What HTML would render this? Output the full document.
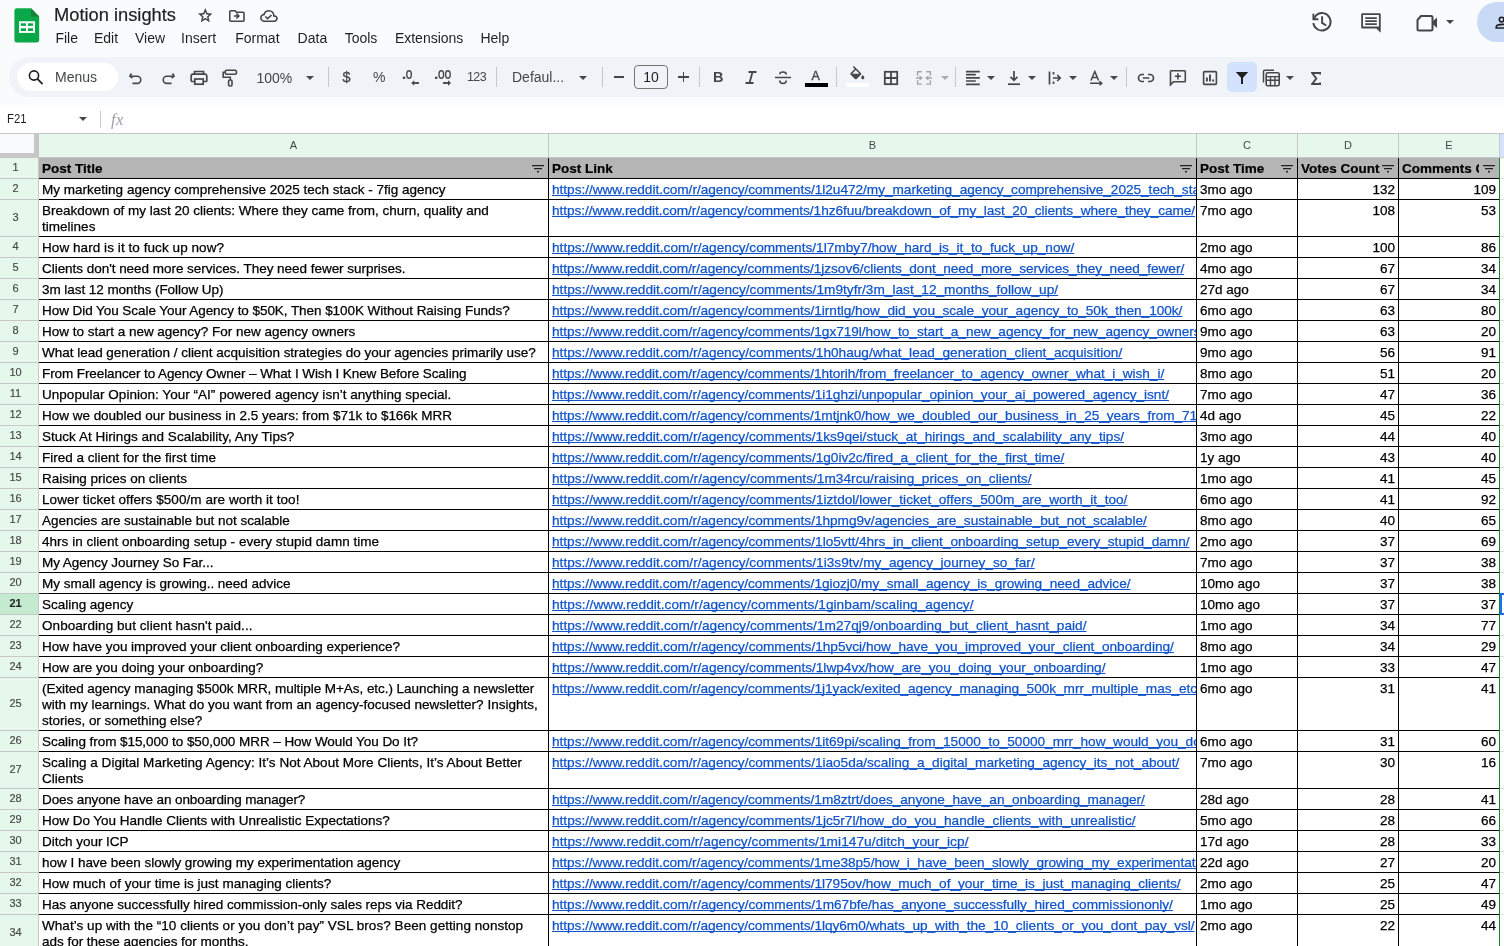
<!DOCTYPE html><html><head><meta charset="utf-8"><style>
*{margin:0;padding:0;box-sizing:border-box}
html,body{width:1504px;height:946px;overflow:hidden;background:#f9fbfd;font-family:"Liberation Sans",sans-serif;position:relative}
body{will-change:transform}
.a{position:absolute}
.t{position:absolute;white-space:nowrap;font-size:13.5px;line-height:16px;color:#000;overflow:hidden;-webkit-text-stroke:0.25px currentColor}
.lk{color:#1155cc;text-decoration:underline;text-decoration-skip-ink:none;text-underline-offset:1px;font-size:13.65px}
.menu{position:absolute;top:30px;font-size:14px;color:#1f1f1f;white-space:nowrap}
.rn{position:absolute;left:0;width:31px;text-align:center;font-size:11px;color:#444746;-webkit-text-stroke:0.15px #444746}
.ic{position:absolute}
</style></head><body>
<svg class="a" style="left:14px;top:8px" width="26" height="35" viewBox="0 0 26 35">
<path d="M2.6 0.2 H17 L25.2 8.4 V31.8 A2.6 2.6 0 0 1 22.6 34.4 H3 A2.6 2.6 0 0 1 0.4 31.8 V2.8 A2.6 2.6 0 0 1 2.6 0.2Z" fill="#0ba84a"/>
<path d="M17 0.2 L25.2 8.4 H17Z" fill="#188038"/>
<rect x="5" y="13.3" width="16" height="11.6" fill="#fff"/>
<rect x="6.8" y="15.3" width="5.2" height="2.6" fill="#0ba84a"/>
<rect x="13.9" y="15.3" width="5.2" height="2.6" fill="#0ba84a"/>
<rect x="6.8" y="20.3" width="5.2" height="2.7" fill="#0ba84a"/>
<rect x="13.9" y="20.3" width="5.2" height="2.7" fill="#0ba84a"/>
</svg>
<div class="a" style="left:54px;top:4px;font-size:18.3px;color:#1f1f1f;-webkit-text-stroke:0.2px #1f1f1f;white-space:nowrap">Motion insights</div>
<svg class="a" style="left:197.6px;top:8px" width="14.6" height="14.4" viewBox="80 -880 800 760" preserveAspectRatio="none"><path fill="#444746" d="m354-287 126-76 126 77-33-144 111-96-146-13-58-136-58 135-146 13 111 97-33 143ZM233-120l65-281L80-590l288-25 112-265 112 265 288 25-218 189 65 281-247-149-247 149Z"/></svg>
<svg class="a" style="left:229.2px;top:9.9px" width="15.8" height="12" viewBox="80 -800 800 640" preserveAspectRatio="none"><path fill="#444746" d="M480-320l160-160-160-160-56 56 64 64H320v80h168l-64 64 56 56ZM160-160q-33 0-56.5-23.5T80-240v-480q0-33 23.5-56.5T160-800h240l80 80h320q33 0 56.5 23.5T880-640v400q0 33-23.5 56.5T800-160H160Zm0-80h640v-400H447l-80-80H160v480Z"/></svg>
<svg class="a" style="left:260.1px;top:9.9px" width="17.8" height="11.9" viewBox="40 -800 880 640" preserveAspectRatio="none"><path fill="#444746" d="m414-280 226-226-58-58-169 169-84-84-57 57 142 142ZM260-160q-91 0-155.5-63T40-377q0-78 47-139t123-78q25-92 100-149t170-57q117 0 198.5 81.5T760-520q69 8 114.5 59.5T920-340q0 75-52.5 127.5T740-160H260Zm0-80h480q42 0 71-29t29-71q0-42-29-71t-71-29h-60v-80q0-83-58.5-141.5T480-720q-83 0-141.5 58.5T280-520h-20q-58 0-99 41t-41 99q0 58 41 99t99 41Z"/></svg>
<div class="menu" style="left:55.4px">File</div>
<div class="menu" style="left:93.9px">Edit</div>
<div class="menu" style="left:135.0px">View</div>
<div class="menu" style="left:181.1px">Insert</div>
<div class="menu" style="left:235.2px">Format</div>
<div class="menu" style="left:297.6px">Data</div>
<div class="menu" style="left:344.7px">Tools</div>
<div class="menu" style="left:394.9px">Extensions</div>
<div class="menu" style="left:480.4px">Help</div>
<svg class="a" style="left:1300px;top:0px" width="90" height="40" viewBox="1300 0 90 40"><g fill="none" stroke="#444746" stroke-width="1.9"><path d="M1313.4 13.8V19.3H1318.4"/><path d="M1313.3 23A8.7 8.7 0 1 0 1316.2 15.2L1313.8 18.8"/><path d="M1322.1 16.2V22.9L1326.2 25.5"/></g><path fill="#444746" fill-rule="evenodd" d="M1362.2 13.2H1379.7A1 1 0 0 1 1380.7 14.2V32.7L1376.4 28.4H1362.2A1 1 0 0 1 1361.2 27.4V14.2A1 1 0 0 1 1362.2 13.2ZM1363 15V26.6H1378.9V15Z"/><path fill="#444746" d="M1365.2 17.2H1376.8V18.9H1365.2ZM1365.2 20.2H1376.8V21.9H1365.2ZM1365.2 23.2H1376.8V24.9H1365.2Z"/></svg>
<svg class="a" style="left:1414.5px;top:11.6px" width="26" height="22" viewBox="0 0 26 22"><path d="M6 4H16a1.5 1.5 0 0 1 1.5 1.5V17a1.5 1.5 0 0 1-1.5 1.5H4A1.5 1.5 0 0 1 2.5 17V8z" fill="none" stroke="#444746" stroke-width="2" stroke-linejoin="round"/><path d="M17.5 9.5L22 5.5V16L17.5 12z" fill="#444746"/></svg>
<div class="a" style="left:1446px;top:20px;width:0;height:0;border-left:4px solid transparent;border-right:4px solid transparent;border-top:4.5px solid #444746"></div>
<div class="a" style="left:1477px;top:2px;width:80px;height:40px;border-radius:20px;background:#c9daf6"></div>
<svg class="a" style="left:1494.5px;top:13.5px" width="16" height="18" viewBox="0 0 16 18"><circle cx="6.6" cy="5.6" r="2.3" fill="none" stroke="#1f1f1f" stroke-width="1.6"/><path d="M1.2 14V13c0-1.8 3.3-2.6 6.8-2.6s6.8.8 6.8 2.6v1z" fill="none" stroke="#1f1f1f" stroke-width="1.6"/></svg>
<div class="a" style="left:9px;top:57px;width:1600px;height:40px;border-radius:20px;background:#f0f4f9"></div>
<div class="a" style="left:17px;top:63px;width:100.5px;height:28px;border-radius:14px;background:#fff"></div>
<svg class="a" style="left:27px;top:69px" width="18" height="18" viewBox="0 0 18 18"><circle cx="7" cy="6.5" r="4.6" fill="none" stroke="#1f1f1f" stroke-width="1.6"/><path d="M10.4 9.9L15.6 15.2" stroke="#1f1f1f" stroke-width="1.7"/></svg>
<div class="a" style="left:55px;top:69px;font-size:14px;color:#444746;white-space:nowrap">Menus</div>
<svg class="a" style="left:128px;top:70px" width="16" height="16" viewBox="0 0 16 16"><path d="M3.5 3.5L1.8 6.2 4.5 8" fill="none" stroke="#444746" stroke-width="1.6" stroke-linejoin="round"/><path d="M2.2 6.2H9.2a3.6 3.6 0 0 1 0 7.2H4.5" fill="none" stroke="#444746" stroke-width="1.6"/></svg>
<svg class="a" style="left:160px;top:70px" width="16" height="16" viewBox="0 0 16 16"><path d="M12.5 3.5L14.2 6.2 11.5 8" fill="none" stroke="#444746" stroke-width="1.6" stroke-linejoin="round"/><path d="M13.8 6.2H6.8a3.6 3.6 0 0 0 0 7.2H11.5" fill="none" stroke="#444746" stroke-width="1.6"/></svg>
<svg class="a" style="left:190px;top:70px" width="18" height="16" viewBox="0 0 18 16"><path d="M4.5 4.2V1.5h9v2.7" fill="none" stroke="#444746" stroke-width="1.7"/><path d="M4.5 11.5H2.2a1 1 0 0 1-1-1V6a1.8 1.8 0 0 1 1.8-1.8h12a1.8 1.8 0 0 1 1.8 1.8v4.5a1 1 0 0 1-1 1h-2.3" fill="none" stroke="#444746" stroke-width="1.7"/><rect x="4.8" y="9" width="8.4" height="5.2" fill="none" stroke="#444746" stroke-width="1.7"/></svg>
<svg class="a" style="left:222px;top:69px" width="16" height="18" viewBox="0 0 16 18"><rect x="3.2" y="1.3" width="11.3" height="4" rx="1.5" fill="none" stroke="#444746" stroke-width="1.6"/><path d="M3.2 3.3H1.2V8.2H8.3V10.8" fill="none" stroke="#444746" stroke-width="1.6"/><rect x="6.6" y="11" width="3.4" height="6" rx="1.2" fill="none" stroke="#444746" stroke-width="1.6"/></svg>
<div class="a" style="left:256.5px;top:70px;font-size:14px;color:#444746;white-space:nowrap">100%</div>
<div class="a" style="left:306px;top:76px;width:0;height:0;border-left:4px solid transparent;border-right:4px solid transparent;border-top:4px solid #444746"></div>
<div class="a" style="left:328px;top:67px;width:1px;height:20px;background:#c7c7c7"></div>
<div class="a" style="left:342.5px;top:69px;font-size:14.5px;color:#444746;-webkit-text-stroke:0.3px #444746">$</div>
<div class="a" style="left:373px;top:69px;font-size:14px;color:#444746">%</div>
<svg class="a" style="left:400px;top:66px" width="24" height="22" viewBox="0 0 24 22"><rect x="2.8" y="10.7" width="2.4" height="2.2" fill="#444746"/><ellipse cx="9.05" cy="8.5" rx="2.3" ry="3.75" fill="none" stroke="#444746" stroke-width="1.4"/><path d="M19 17H13.5" stroke="#444746" stroke-width="1.9"/><path d="M11.2 17L14.2 14.2V19.8Z" fill="#444746"/></svg>
<svg class="a" style="left:432px;top:66px" width="24" height="22" viewBox="0 0 24 22"><rect x="3" y="10.7" width="2.4" height="2.2" fill="#444746"/><ellipse cx="9.3" cy="8.5" rx="2.3" ry="3.75" fill="none" stroke="#444746" stroke-width="1.4"/><ellipse cx="15.9" cy="8.5" rx="2.3" ry="3.75" fill="none" stroke="#444746" stroke-width="1.4"/><path d="M11 17H16.5" stroke="#444746" stroke-width="1.9"/><path d="M19 17L16 14.2V19.8Z" fill="#444746"/></svg>
<div class="a" style="left:467px;top:70px;font-size:12.5px;letter-spacing:-0.6px;color:#444746">123</div>
<div class="a" style="left:496px;top:67px;width:1px;height:20px;background:#c7c7c7"></div>
<div class="a" style="left:512px;top:69px;font-size:14px;color:#444746;white-space:nowrap">Defaul...</div>
<div class="a" style="left:579px;top:76px;width:0;height:0;border-left:4px solid transparent;border-right:4px solid transparent;border-top:4px solid #444746"></div>
<div class="a" style="left:602px;top:67px;width:1px;height:20px;background:#c7c7c7"></div>
<div class="a" style="left:614px;top:76px;width:10px;height:1.6px;background:#444746"></div>
<div class="a" style="left:634px;top:65px;width:34px;height:24px;border:1px solid #747775;border-radius:4px"></div>
<div class="a" style="left:634px;top:69px;width:34px;text-align:center;font-size:14px;color:#1f1f1f">10</div>
<div class="a" style="left:678px;top:76px;width:10.5px;height:1.6px;background:#444746"></div>
<div class="a" style="left:682.5px;top:71.5px;width:1.6px;height:10.5px;background:#444746"></div>
<div class="a" style="left:699px;top:67px;width:1px;height:20px;background:#c7c7c7"></div>
<div class="a" style="left:713px;top:69px;font-size:14.5px;font-weight:bold;color:#444746">B</div>
<svg class="a" style="left:744px;top:71px" width="14" height="13" viewBox="0 0 14 13"><path d="M4.5 1H12.5M1.5 12H9.5M8.5 1L5.5 12" stroke="#444746" stroke-width="1.8" fill="none"/></svg>
<svg class="a" style="left:775px;top:71px" width="17" height="14" viewBox="0 0 17 14"><path d="M0 6.5H16" stroke="#444746" stroke-width="1.5"/><path d="M11.2 3.5C11.2 1.8 9.8 1 8 1S4.8 1.8 4.8 3.2M4.8 9.5C4.8 11.3 6.2 12.5 8 12.5S11.2 11.5 11.2 9.5" fill="none" stroke="#444746" stroke-width="1.6"/></svg>
<div class="a" style="left:811.5px;top:68.5px;font-size:12.5px;color:#444746;-webkit-text-stroke:0.35px #444746">A</div>
<div class="a" style="left:805px;top:83px;width:23px;height:4px;background:#000"></div>
<div class="a" style="left:836px;top:67px;width:1px;height:20px;background:#c7c7c7"></div>
<svg class="a" style="left:847.7px;top:66.2px" width="19" height="15" viewBox="0 0 24.4 19.2"><path fill="#444746" d="M16.56 8.94L7.62 0 6.21 1.41l2.38 2.38-5.15 5.15c-.59.59-.59 1.54 0 2.12l5.5 5.5c.29.29.68.44 1.06.44s.77-.15 1.06-.44l5.5-5.5c.59-.58.59-1.53 0-2.12zM5.21 10L10 5.21 14.79 10H5.21zM19 11.5s-2 2.17-2 3.5c0 1.1.9 2 2 2s2-.9 2-2c0-1.33-2-3.5-2-3.5z"/></svg>
<div class="a" style="left:846px;top:83px;width:23px;height:4px;background:#fff"></div>
<svg class="a" style="left:883px;top:70px" width="16" height="16" viewBox="0 0 16 16"><rect x="1.8" y="1.8" width="12.4" height="12.4" fill="none" stroke="#444746" stroke-width="1.8"/><path d="M8 1.8V14.2M1.8 8H14.2" stroke="#444746" stroke-width="1.8"/></svg>
<svg class="a" style="left:915px;top:70px" width="18" height="16" viewBox="0 0 18 16"><path d="M6.8 1.7H2.6V5.8M2.6 10.2V14.1H6.8M11.2 1.7H15.4V5.8M15.4 10.2V14.1H11.2" fill="none" stroke="#a3a5a8" stroke-width="1.4"/><path d="M1 7.9H5.5M17 7.9H12.5" stroke="#a3a5a8" stroke-width="1.5"/><path d="M4.6 5.4L7.9 7.9 4.6 10.4ZM13.4 5.4L10.1 7.9 13.4 10.4Z" fill="#a3a5a8"/></svg>
<div class="a" style="left:941px;top:76px;width:0;height:0;border-left:4px solid transparent;border-right:4px solid transparent;border-top:4px solid #a8abae"></div>
<div class="a" style="left:955px;top:67px;width:1px;height:20px;background:#c7c7c7"></div>
<svg class="a" style="left:965px;top:70px" width="16" height="16" viewBox="0 0 16 16"><path d="M1 1.6H14.8M1 4.65H10.8M1 7.9H14.8M1 11H10.8M1 14.3H14.8" stroke="#444746" stroke-width="1.7"/></svg>
<div class="a" style="left:987px;top:76px;width:0;height:0;border-left:4px solid transparent;border-right:4px solid transparent;border-top:4px solid #444746"></div>
<svg class="a" style="left:1006px;top:70px" width="16" height="16" viewBox="0 0 16 16"><path d="M8 1V10M4.5 6.8L8 10.3 11.5 6.8" fill="none" stroke="#444746" stroke-width="1.7"/><path d="M2 14.2H14" stroke="#444746" stroke-width="1.7"/></svg>
<div class="a" style="left:1028px;top:76px;width:0;height:0;border-left:4px solid transparent;border-right:4px solid transparent;border-top:4px solid #444746"></div>
<svg class="a" style="left:1047px;top:70px" width="16" height="16" viewBox="0 0 16 16"><path d="M2.5 1.5V14.5" stroke="#444746" stroke-width="1.7"/><path d="M6 8H13M10.2 5L13.2 8 10.2 11" fill="none" stroke="#444746" stroke-width="1.7"/><path d="M6.5 2V4.5M6.5 11.5V14" stroke="#444746" stroke-width="1.7"/></svg>
<div class="a" style="left:1069px;top:76px;width:0;height:0;border-left:4px solid transparent;border-right:4px solid transparent;border-top:4px solid #444746"></div>
<svg class="a" style="left:1089px;top:70px" width="16" height="16" viewBox="0 0 16 16"><path d="M2 10.5L5.8 1.5 9.6 10.5M3.3 7.5H8.3" fill="none" stroke="#444746" stroke-width="1.5"/><path d="M1 13.2H12.5M10.5 11.2L12.8 13.2 10.5 15.2" fill="none" stroke="#444746" stroke-width="1.5"/></svg>
<div class="a" style="left:1110px;top:76px;width:0;height:0;border-left:4px solid transparent;border-right:4px solid transparent;border-top:4px solid #444746"></div>
<div class="a" style="left:1126px;top:67px;width:1px;height:20px;background:#c7c7c7"></div>
<svg class="a" style="left:1137px;top:70px" width="18" height="16" viewBox="0 0 18 16"><path d="M7 4.5H5a3.5 3.5 0 0 0 0 7h2M11 4.5h2a3.5 3.5 0 0 1 0 7h-2M5.8 8H12.2" fill="none" stroke="#444746" stroke-width="1.7"/></svg>
<svg class="a" style="left:1169px;top:69px" width="18" height="18" viewBox="0 0 18 18"><path d="M2.2 1.8H15.5a.8.8 0 0 1 .8.8V12a.8.8 0 0 1-.8.8H4.5L1.5 15.8V2.6a.8.8 0 0 1 .7-.8z" fill="none" stroke="#444746" stroke-width="1.6"/><path d="M8.9 4.2V10.4M5.8 7.3H12" stroke="#444746" stroke-width="1.6"/></svg>
<svg class="a" style="left:1202px;top:70px" width="16" height="16" viewBox="0 0 16 16"><rect x="1.6" y="1.6" width="12.8" height="12.8" rx="1" fill="none" stroke="#444746" stroke-width="1.6"/><path d="M4.9 11.6V7.6M8 11.6V4.4M11.1 11.6V9.4" stroke="#444746" stroke-width="1.9"/></svg>
<div class="a" style="left:1227px;top:62px;width:30px;height:30px;border-radius:5px;background:#d3e3fd"></div>
<svg class="a" style="left:1235px;top:71px" width="14" height="14" viewBox="0 0 14 14"><path d="M0.8 1H13.2L8 6.8V13H6V6.8z" fill="#1f1f1f"/></svg>
<svg class="a" style="left:1262px;top:69px" width="19" height="18" viewBox="0 0 19 18"><path d="M1.5 13.5V2.5A1.3 1.3 0 0 1 2.8 1.2H12" fill="none" stroke="#444746" stroke-width="1.5"/><rect x="4.2" y="3.8" width="13" height="13" rx="1.5" fill="none" stroke="#444746" stroke-width="1.6"/><path d="M4.2 7.6H17.2M4.2 11.3H17.2M8.5 7.6V16.8M12.9 7.6V16.8" stroke="#444746" stroke-width="1.4"/></svg>
<div class="a" style="left:1286px;top:76px;width:0;height:0;border-left:4px solid transparent;border-right:4px solid transparent;border-top:4px solid #444746"></div>
<svg class="a" style="left:1311px;top:71.5px" width="10" height="13" viewBox="0 0 10 13"><path d="M9.2 2.6V1H1.2L5.3 6.5 1.2 12H9.2V10.4" fill="none" stroke="#444746" stroke-width="1.9" stroke-linejoin="miter"/></svg>
<div class="a" style="left:0;top:105px;width:1504px;height:28px;background:#fff"></div>
<div class="a" style="left:7px;top:110.5px;font-size:13.3px;transform:scaleX(0.85);transform-origin:0 0;color:#1f1f1f">F21</div>
<div class="a" style="left:79px;top:117px;width:0;height:0;border-left:4px solid transparent;border-right:4px solid transparent;border-top:4px solid #444746"></div>
<div class="a" style="left:100px;top:111px;width:1px;height:17px;background:#c7c7c7"></div>
<div class="a" style="left:111px;top:110px;font-family:'Liberation Serif',serif;font-style:italic;font-size:16.5px;letter-spacing:0.3px;color:#9aa0a6">fx</div>
<div class="a" style="left:0;top:133px;width:1504px;height:1px;background:#c4c7c5"></div>
<div class="a" style="left:0;top:134px;width:34px;height:19px;background:#f8fafd"></div>
<div class="a" style="left:34px;top:134px;width:5px;height:24px;background:#c7c7c7"></div>
<div class="a" style="left:0;top:153px;width:39px;height:5px;background:#c7c7c7"></div>
<div class="a" style="left:39px;top:134px;width:1461px;height:23px;background:#e6f7eb"></div>
<div class="a" style="left:1500px;top:134px;width:10px;height:23px;background:#d3e3fd"></div>
<div class="a" style="left:39px;top:157px;width:1470px;height:1px;background:#c7c7c7"></div>
<div class="a" style="left:39px;top:139px;width:509px;text-align:center;font-size:11px;color:#444746">A</div>
<div class="a" style="left:548px;top:134px;width:1px;height:23px;background:#c7c7c7"></div>
<div class="a" style="left:549px;top:139px;width:647px;text-align:center;font-size:11px;color:#444746">B</div>
<div class="a" style="left:1196px;top:134px;width:1px;height:23px;background:#c7c7c7"></div>
<div class="a" style="left:1197px;top:139px;width:100px;text-align:center;font-size:11px;color:#444746">C</div>
<div class="a" style="left:1297px;top:134px;width:1px;height:23px;background:#c7c7c7"></div>
<div class="a" style="left:1298px;top:139px;width:100px;text-align:center;font-size:11px;color:#444746">D</div>
<div class="a" style="left:1398px;top:134px;width:1px;height:23px;background:#c7c7c7"></div>
<div class="a" style="left:1399px;top:139px;width:100px;text-align:center;font-size:11px;color:#444746">E</div>
<div class="a" style="left:1499px;top:134px;width:1px;height:23px;background:#c7c7c7"></div>
<div class="a" style="left:0;top:158px;width:38px;height:800px;background:#e6f7eb"></div>
<div class="a" style="left:38px;top:158px;width:1px;height:800px;background:#c7c7c7"></div>
<div class="a" style="left:39px;top:158px;width:1470px;height:800px;background:#fff"></div>
<div class="a" style="left:39px;top:158px;width:1460px;height:20px;background:#b4b5b4"></div>
<div class="a" style="left:0;top:178px;width:38px;height:1px;background:#c7c7c7"></div>
<div class="a" style="left:39px;top:178px;width:1460px;height:1px;background:#000"></div>
<div class="a" style="left:1500px;top:178px;width:10px;height:1px;background:#e1e1e1"></div>
<div class="rn" style="top:157px;height:20px;line-height:20px;">1</div>
<div class="a" style="left:0;top:199px;width:38px;height:1px;background:#c7c7c7"></div>
<div class="a" style="left:39px;top:199px;width:1460px;height:1px;background:#000"></div>
<div class="a" style="left:1500px;top:199px;width:10px;height:1px;background:#e1e1e1"></div>
<div class="rn" style="top:178px;height:20px;line-height:20px;">2</div>
<div class="a" style="left:0;top:236px;width:38px;height:1px;background:#c7c7c7"></div>
<div class="a" style="left:39px;top:236px;width:1460px;height:1px;background:#000"></div>
<div class="a" style="left:1500px;top:236px;width:10px;height:1px;background:#e1e1e1"></div>
<div class="rn" style="top:199px;height:36px;line-height:36px;">3</div>
<div class="a" style="left:0;top:257px;width:38px;height:1px;background:#c7c7c7"></div>
<div class="a" style="left:39px;top:257px;width:1460px;height:1px;background:#000"></div>
<div class="a" style="left:1500px;top:257px;width:10px;height:1px;background:#e1e1e1"></div>
<div class="rn" style="top:236px;height:20px;line-height:20px;">4</div>
<div class="a" style="left:0;top:278px;width:38px;height:1px;background:#c7c7c7"></div>
<div class="a" style="left:39px;top:278px;width:1460px;height:1px;background:#000"></div>
<div class="a" style="left:1500px;top:278px;width:10px;height:1px;background:#e1e1e1"></div>
<div class="rn" style="top:257px;height:20px;line-height:20px;">5</div>
<div class="a" style="left:0;top:299px;width:38px;height:1px;background:#c7c7c7"></div>
<div class="a" style="left:39px;top:299px;width:1460px;height:1px;background:#000"></div>
<div class="a" style="left:1500px;top:299px;width:10px;height:1px;background:#e1e1e1"></div>
<div class="rn" style="top:278px;height:20px;line-height:20px;">6</div>
<div class="a" style="left:0;top:320px;width:38px;height:1px;background:#c7c7c7"></div>
<div class="a" style="left:39px;top:320px;width:1460px;height:1px;background:#000"></div>
<div class="a" style="left:1500px;top:320px;width:10px;height:1px;background:#e1e1e1"></div>
<div class="rn" style="top:299px;height:20px;line-height:20px;">7</div>
<div class="a" style="left:0;top:341px;width:38px;height:1px;background:#c7c7c7"></div>
<div class="a" style="left:39px;top:341px;width:1460px;height:1px;background:#000"></div>
<div class="a" style="left:1500px;top:341px;width:10px;height:1px;background:#e1e1e1"></div>
<div class="rn" style="top:320px;height:20px;line-height:20px;">8</div>
<div class="a" style="left:0;top:362px;width:38px;height:1px;background:#c7c7c7"></div>
<div class="a" style="left:39px;top:362px;width:1460px;height:1px;background:#000"></div>
<div class="a" style="left:1500px;top:362px;width:10px;height:1px;background:#e1e1e1"></div>
<div class="rn" style="top:341px;height:20px;line-height:20px;">9</div>
<div class="a" style="left:0;top:383px;width:38px;height:1px;background:#c7c7c7"></div>
<div class="a" style="left:39px;top:383px;width:1460px;height:1px;background:#000"></div>
<div class="a" style="left:1500px;top:383px;width:10px;height:1px;background:#e1e1e1"></div>
<div class="rn" style="top:362px;height:20px;line-height:20px;">10</div>
<div class="a" style="left:0;top:404px;width:38px;height:1px;background:#c7c7c7"></div>
<div class="a" style="left:39px;top:404px;width:1460px;height:1px;background:#000"></div>
<div class="a" style="left:1500px;top:404px;width:10px;height:1px;background:#e1e1e1"></div>
<div class="rn" style="top:383px;height:20px;line-height:20px;">11</div>
<div class="a" style="left:0;top:425px;width:38px;height:1px;background:#c7c7c7"></div>
<div class="a" style="left:39px;top:425px;width:1460px;height:1px;background:#000"></div>
<div class="a" style="left:1500px;top:425px;width:10px;height:1px;background:#e1e1e1"></div>
<div class="rn" style="top:404px;height:20px;line-height:20px;">12</div>
<div class="a" style="left:0;top:446px;width:38px;height:1px;background:#c7c7c7"></div>
<div class="a" style="left:39px;top:446px;width:1460px;height:1px;background:#000"></div>
<div class="a" style="left:1500px;top:446px;width:10px;height:1px;background:#e1e1e1"></div>
<div class="rn" style="top:425px;height:20px;line-height:20px;">13</div>
<div class="a" style="left:0;top:467px;width:38px;height:1px;background:#c7c7c7"></div>
<div class="a" style="left:39px;top:467px;width:1460px;height:1px;background:#000"></div>
<div class="a" style="left:1500px;top:467px;width:10px;height:1px;background:#e1e1e1"></div>
<div class="rn" style="top:446px;height:20px;line-height:20px;">14</div>
<div class="a" style="left:0;top:488px;width:38px;height:1px;background:#c7c7c7"></div>
<div class="a" style="left:39px;top:488px;width:1460px;height:1px;background:#000"></div>
<div class="a" style="left:1500px;top:488px;width:10px;height:1px;background:#e1e1e1"></div>
<div class="rn" style="top:467px;height:20px;line-height:20px;">15</div>
<div class="a" style="left:0;top:509px;width:38px;height:1px;background:#c7c7c7"></div>
<div class="a" style="left:39px;top:509px;width:1460px;height:1px;background:#000"></div>
<div class="a" style="left:1500px;top:509px;width:10px;height:1px;background:#e1e1e1"></div>
<div class="rn" style="top:488px;height:20px;line-height:20px;">16</div>
<div class="a" style="left:0;top:530px;width:38px;height:1px;background:#c7c7c7"></div>
<div class="a" style="left:39px;top:530px;width:1460px;height:1px;background:#000"></div>
<div class="a" style="left:1500px;top:530px;width:10px;height:1px;background:#e1e1e1"></div>
<div class="rn" style="top:509px;height:20px;line-height:20px;">17</div>
<div class="a" style="left:0;top:551px;width:38px;height:1px;background:#c7c7c7"></div>
<div class="a" style="left:39px;top:551px;width:1460px;height:1px;background:#000"></div>
<div class="a" style="left:1500px;top:551px;width:10px;height:1px;background:#e1e1e1"></div>
<div class="rn" style="top:530px;height:20px;line-height:20px;">18</div>
<div class="a" style="left:0;top:572px;width:38px;height:1px;background:#c7c7c7"></div>
<div class="a" style="left:39px;top:572px;width:1460px;height:1px;background:#000"></div>
<div class="a" style="left:1500px;top:572px;width:10px;height:1px;background:#e1e1e1"></div>
<div class="rn" style="top:551px;height:20px;line-height:20px;">19</div>
<div class="a" style="left:0;top:593px;width:38px;height:1px;background:#c7c7c7"></div>
<div class="a" style="left:39px;top:593px;width:1460px;height:1px;background:#000"></div>
<div class="a" style="left:1500px;top:593px;width:10px;height:1px;background:#e1e1e1"></div>
<div class="rn" style="top:572px;height:20px;line-height:20px;">20</div>
<div class="a" style="left:0;top:594px;width:38px;height:20px;background:#c4eacf"></div>
<div class="a" style="left:0;top:614px;width:38px;height:1px;background:#c7c7c7"></div>
<div class="a" style="left:39px;top:614px;width:1460px;height:1px;background:#000"></div>
<div class="a" style="left:1500px;top:614px;width:10px;height:1px;background:#e1e1e1"></div>
<div class="rn" style="top:593px;height:20px;line-height:20px;font-weight:bold;color:#1f1f1f">21</div>
<div class="a" style="left:0;top:635px;width:38px;height:1px;background:#c7c7c7"></div>
<div class="a" style="left:39px;top:635px;width:1460px;height:1px;background:#000"></div>
<div class="a" style="left:1500px;top:635px;width:10px;height:1px;background:#e1e1e1"></div>
<div class="rn" style="top:614px;height:20px;line-height:20px;">22</div>
<div class="a" style="left:0;top:656px;width:38px;height:1px;background:#c7c7c7"></div>
<div class="a" style="left:39px;top:656px;width:1460px;height:1px;background:#000"></div>
<div class="a" style="left:1500px;top:656px;width:10px;height:1px;background:#e1e1e1"></div>
<div class="rn" style="top:635px;height:20px;line-height:20px;">23</div>
<div class="a" style="left:0;top:677px;width:38px;height:1px;background:#c7c7c7"></div>
<div class="a" style="left:39px;top:677px;width:1460px;height:1px;background:#000"></div>
<div class="a" style="left:1500px;top:677px;width:10px;height:1px;background:#e1e1e1"></div>
<div class="rn" style="top:656px;height:20px;line-height:20px;">24</div>
<div class="a" style="left:0;top:730px;width:38px;height:1px;background:#c7c7c7"></div>
<div class="a" style="left:39px;top:730px;width:1460px;height:1px;background:#000"></div>
<div class="a" style="left:1500px;top:730px;width:10px;height:1px;background:#e1e1e1"></div>
<div class="rn" style="top:677px;height:52px;line-height:52px;">25</div>
<div class="a" style="left:0;top:751px;width:38px;height:1px;background:#c7c7c7"></div>
<div class="a" style="left:39px;top:751px;width:1460px;height:1px;background:#000"></div>
<div class="a" style="left:1500px;top:751px;width:10px;height:1px;background:#e1e1e1"></div>
<div class="rn" style="top:730px;height:20px;line-height:20px;">26</div>
<div class="a" style="left:0;top:788px;width:38px;height:1px;background:#c7c7c7"></div>
<div class="a" style="left:39px;top:788px;width:1460px;height:1px;background:#000"></div>
<div class="a" style="left:1500px;top:788px;width:10px;height:1px;background:#e1e1e1"></div>
<div class="rn" style="top:751px;height:36px;line-height:36px;">27</div>
<div class="a" style="left:0;top:809px;width:38px;height:1px;background:#c7c7c7"></div>
<div class="a" style="left:39px;top:809px;width:1460px;height:1px;background:#000"></div>
<div class="a" style="left:1500px;top:809px;width:10px;height:1px;background:#e1e1e1"></div>
<div class="rn" style="top:788px;height:20px;line-height:20px;">28</div>
<div class="a" style="left:0;top:830px;width:38px;height:1px;background:#c7c7c7"></div>
<div class="a" style="left:39px;top:830px;width:1460px;height:1px;background:#000"></div>
<div class="a" style="left:1500px;top:830px;width:10px;height:1px;background:#e1e1e1"></div>
<div class="rn" style="top:809px;height:20px;line-height:20px;">29</div>
<div class="a" style="left:0;top:851px;width:38px;height:1px;background:#c7c7c7"></div>
<div class="a" style="left:39px;top:851px;width:1460px;height:1px;background:#000"></div>
<div class="a" style="left:1500px;top:851px;width:10px;height:1px;background:#e1e1e1"></div>
<div class="rn" style="top:830px;height:20px;line-height:20px;">30</div>
<div class="a" style="left:0;top:872px;width:38px;height:1px;background:#c7c7c7"></div>
<div class="a" style="left:39px;top:872px;width:1460px;height:1px;background:#000"></div>
<div class="a" style="left:1500px;top:872px;width:10px;height:1px;background:#e1e1e1"></div>
<div class="rn" style="top:851px;height:20px;line-height:20px;">31</div>
<div class="a" style="left:0;top:893px;width:38px;height:1px;background:#c7c7c7"></div>
<div class="a" style="left:39px;top:893px;width:1460px;height:1px;background:#000"></div>
<div class="a" style="left:1500px;top:893px;width:10px;height:1px;background:#e1e1e1"></div>
<div class="rn" style="top:872px;height:20px;line-height:20px;">32</div>
<div class="a" style="left:0;top:914px;width:38px;height:1px;background:#c7c7c7"></div>
<div class="a" style="left:39px;top:914px;width:1460px;height:1px;background:#000"></div>
<div class="a" style="left:1500px;top:914px;width:10px;height:1px;background:#e1e1e1"></div>
<div class="rn" style="top:893px;height:20px;line-height:20px;">33</div>
<div class="a" style="left:0;top:951px;width:38px;height:1px;background:#c7c7c7"></div>
<div class="a" style="left:39px;top:951px;width:1460px;height:1px;background:#000"></div>
<div class="a" style="left:1500px;top:951px;width:10px;height:1px;background:#e1e1e1"></div>
<div class="rn" style="top:914px;height:36px;line-height:36px;">34</div>
<div class="a" style="left:548px;top:158px;width:1px;height:800px;background:#000"></div>
<div class="a" style="left:1196px;top:158px;width:1px;height:800px;background:#000"></div>
<div class="a" style="left:1297px;top:158px;width:1px;height:800px;background:#000"></div>
<div class="a" style="left:1398px;top:158px;width:1px;height:800px;background:#000"></div>
<div class="a" style="left:1499px;top:158px;width:1px;height:800px;background:#188038"></div>
<div class="a" style="left:1500px;top:593px;width:20px;height:22px;border:2px solid #1a73e8"></div>
<div class="t" style="left:42px;top:160.7px;width:489px;font-weight:bold;-webkit-text-stroke:0.2px #000">Post Title</div>
<svg class="a" style="left:532px;top:164px" width="12" height="9" viewBox="0 0 12 9"><path d="M0 1.6H12M2 4.6H10" stroke="#202124" stroke-width="1.3"/><rect x="5" y="7" width="2" height="1.4" fill="#202124"/></svg>
<div class="t" style="left:552px;top:160.7px;width:627px;font-weight:bold;-webkit-text-stroke:0.2px #000">Post Link</div>
<svg class="a" style="left:1180px;top:164px" width="12" height="9" viewBox="0 0 12 9"><path d="M0 1.6H12M2 4.6H10" stroke="#202124" stroke-width="1.3"/><rect x="5" y="7" width="2" height="1.4" fill="#202124"/></svg>
<div class="t" style="left:1200px;top:160.7px;width:80px;font-weight:bold;-webkit-text-stroke:0.2px #000">Post Time</div>
<svg class="a" style="left:1281px;top:164px" width="12" height="9" viewBox="0 0 12 9"><path d="M0 1.6H12M2 4.6H10" stroke="#202124" stroke-width="1.3"/><rect x="5" y="7" width="2" height="1.4" fill="#202124"/></svg>
<div class="t" style="left:1301px;top:160.7px;width:80px;font-weight:bold;-webkit-text-stroke:0.2px #000">Votes Count</div>
<svg class="a" style="left:1382px;top:164px" width="12" height="9" viewBox="0 0 12 9"><path d="M0 1.6H12M2 4.6H10" stroke="#202124" stroke-width="1.3"/><rect x="5" y="7" width="2" height="1.4" fill="#202124"/></svg>
<div class="t" style="left:1402px;top:160.7px;width:77px;font-weight:bold;-webkit-text-stroke:0.2px #000">Comments Count</div>
<svg class="a" style="left:1483px;top:164px" width="12" height="9" viewBox="0 0 12 9"><path d="M0 1.6H12M2 4.6H10" stroke="#202124" stroke-width="1.3"/><rect x="5" y="7" width="2" height="1.4" fill="#202124"/></svg>
<div class="t " style="left:42px;top:181.7px;width:505px;text-align:left;"><span class="ln" data-r="2" data-l="0" style="letter-spacing:0.010px">My marketing agency comprehensive 2025 tech stack - 7fig agency</span></div>
<div class="t" style="left:552px;top:181.7px;width:644px"><span class="lk" data-r="2" style="letter-spacing:-0.027px">https://www.reddit.com/r/agency/comments/1l2u472/my_marketing_agency_comprehensive_2025_tech_stack_7fig_agency/</span></div>
<div class="t" style="left:1200px;top:181.7px;width:95px">3mo ago</div>
<div class="t" style="left:1298px;top:181.7px;width:97px;text-align:right">132</div>
<div class="t" style="left:1399px;top:181.7px;width:97px;text-align:right">109</div>
<div class="t " style="left:42px;top:202.7px;width:505px;text-align:left;"><span class="ln" data-r="3" data-l="0" style="letter-spacing:-0.016px">Breakdown of my last 20 clients: Where they came from, churn, quality and</span><br><span class="ln" data-r="3" data-l="1" style="letter-spacing:0.015px">timelines</span></div>
<div class="t" style="left:552px;top:202.7px;width:644px"><span class="lk" data-r="3" style="letter-spacing:-0.054px">https://www.reddit.com/r/agency/comments/1hz6fuu/breakdown_of_my_last_20_clients_where_they_came/</span></div>
<div class="t" style="left:1200px;top:202.7px;width:95px">7mo ago</div>
<div class="t" style="left:1298px;top:202.7px;width:97px;text-align:right">108</div>
<div class="t" style="left:1399px;top:202.7px;width:97px;text-align:right">53</div>
<div class="t " style="left:42px;top:239.7px;width:505px;text-align:left;"><span class="ln" data-r="4" data-l="0" style="letter-spacing:0.066px">How hard is it to fuck up now?</span></div>
<div class="t" style="left:552px;top:239.7px;width:644px"><span class="lk" data-r="4" style="letter-spacing:0.007px">https://www.reddit.com/r/agency/comments/1l7mby7/how_hard_is_it_to_fuck_up_now/</span></div>
<div class="t" style="left:1200px;top:239.7px;width:95px">2mo ago</div>
<div class="t" style="left:1298px;top:239.7px;width:97px;text-align:right">100</div>
<div class="t" style="left:1399px;top:239.7px;width:97px;text-align:right">86</div>
<div class="t " style="left:42px;top:260.7px;width:505px;text-align:left;"><span class="ln" data-r="5" data-l="0" style="letter-spacing:-0.034px">Clients don&#x27;t need more services. They need fewer surprises.</span></div>
<div class="t" style="left:552px;top:260.7px;width:644px"><span class="lk" data-r="5" style="letter-spacing:-0.049px">https://www.reddit.com/r/agency/comments/1jzsov6/clients_dont_need_more_services_they_need_fewer/</span></div>
<div class="t" style="left:1200px;top:260.7px;width:95px">4mo ago</div>
<div class="t" style="left:1298px;top:260.7px;width:97px;text-align:right">67</div>
<div class="t" style="left:1399px;top:260.7px;width:97px;text-align:right">34</div>
<div class="t " style="left:42px;top:281.7px;width:505px;text-align:left;"><span class="ln" data-r="6" data-l="0" style="letter-spacing:-0.059px">3m last 12 months (Follow Up)</span></div>
<div class="t" style="left:552px;top:281.7px;width:644px"><span class="lk" data-r="6" style="letter-spacing:0.015px">https://www.reddit.com/r/agency/comments/1m9tyfr/3m_last_12_months_follow_up/</span></div>
<div class="t" style="left:1200px;top:281.7px;width:95px">27d ago</div>
<div class="t" style="left:1298px;top:281.7px;width:97px;text-align:right">67</div>
<div class="t" style="left:1399px;top:281.7px;width:97px;text-align:right">34</div>
<div class="t " style="left:42px;top:302.7px;width:505px;text-align:left;"><span class="ln" data-r="7" data-l="0" style="letter-spacing:-0.058px">How Did You Scale Your Agency to $50K, Then $100K Without Raising Funds?</span></div>
<div class="t" style="left:552px;top:302.7px;width:644px"><span class="lk" data-r="7" style="letter-spacing:-0.037px">https://www.reddit.com/r/agency/comments/1irntlg/how_did_you_scale_your_agency_to_50k_then_100k/</span></div>
<div class="t" style="left:1200px;top:302.7px;width:95px">6mo ago</div>
<div class="t" style="left:1298px;top:302.7px;width:97px;text-align:right">63</div>
<div class="t" style="left:1399px;top:302.7px;width:97px;text-align:right">80</div>
<div class="t " style="left:42px;top:323.7px;width:505px;text-align:left;"><span class="ln" data-r="8" data-l="0" style="letter-spacing:-0.010px">How to start a new agency? For new agency owners</span></div>
<div class="t" style="left:552px;top:323.7px;width:644px"><span class="lk" data-r="8" style="letter-spacing:-0.037px">https://www.reddit.com/r/agency/comments/1gx719l/how_to_start_a_new_agency_for_new_agency_owners/</span></div>
<div class="t" style="left:1200px;top:323.7px;width:95px">9mo ago</div>
<div class="t" style="left:1298px;top:323.7px;width:97px;text-align:right">63</div>
<div class="t" style="left:1399px;top:323.7px;width:97px;text-align:right">20</div>
<div class="t " style="left:42px;top:344.7px;width:505px;text-align:left;"><span class="ln" data-r="9" data-l="0" style="letter-spacing:-0.018px">What lead generation / client acquisition strategies do your agencies primarily use?</span></div>
<div class="t" style="left:552px;top:344.7px;width:644px"><span class="lk" data-r="9" style="letter-spacing:-0.000px">https://www.reddit.com/r/agency/comments/1h0haug/what_lead_generation_client_acquisition/</span></div>
<div class="t" style="left:1200px;top:344.7px;width:95px">9mo ago</div>
<div class="t" style="left:1298px;top:344.7px;width:97px;text-align:right">56</div>
<div class="t" style="left:1399px;top:344.7px;width:97px;text-align:right">91</div>
<div class="t " style="left:42px;top:365.7px;width:505px;text-align:left;"><span class="ln" data-r="10" data-l="0" style="letter-spacing:-0.094px">From Freelancer to Agency Owner – What I Wish I Knew Before Scaling</span></div>
<div class="t" style="left:552px;top:365.7px;width:644px"><span class="lk" data-r="10" style="letter-spacing:-0.045px">https://www.reddit.com/r/agency/comments/1htorih/from_freelancer_to_agency_owner_what_i_wish_i/</span></div>
<div class="t" style="left:1200px;top:365.7px;width:95px">8mo ago</div>
<div class="t" style="left:1298px;top:365.7px;width:97px;text-align:right">51</div>
<div class="t" style="left:1399px;top:365.7px;width:97px;text-align:right">20</div>
<div class="t " style="left:42px;top:386.7px;width:505px;text-align:left;"><span class="ln" data-r="11" data-l="0" style="letter-spacing:0.027px">Unpopular Opinion: Your “AI” powered agency isn’t anything special.</span></div>
<div class="t" style="left:552px;top:386.7px;width:644px"><span class="lk" data-r="11" style="letter-spacing:-0.027px">https://www.reddit.com/r/agency/comments/1i1ghzi/unpopular_opinion_your_ai_powered_agency_isnt/</span></div>
<div class="t" style="left:1200px;top:386.7px;width:95px">7mo ago</div>
<div class="t" style="left:1298px;top:386.7px;width:97px;text-align:right">47</div>
<div class="t" style="left:1399px;top:386.7px;width:97px;text-align:right">36</div>
<div class="t " style="left:42px;top:407.7px;width:505px;text-align:left;"><span class="ln" data-r="12" data-l="0" style="letter-spacing:-0.019px">How we doubled our business in 2.5 years: from $71k to $166k MRR</span></div>
<div class="t" style="left:552px;top:407.7px;width:644px"><span class="lk" data-r="12" style="letter-spacing:-0.049px">https://www.reddit.com/r/agency/comments/1mtjnk0/how_we_doubled_our_business_in_25_years_from_71k/</span></div>
<div class="t" style="left:1200px;top:407.7px;width:95px">4d ago</div>
<div class="t" style="left:1298px;top:407.7px;width:97px;text-align:right">45</div>
<div class="t" style="left:1399px;top:407.7px;width:97px;text-align:right">22</div>
<div class="t " style="left:42px;top:428.7px;width:505px;text-align:left;"><span class="ln" data-r="13" data-l="0" style="letter-spacing:0.026px">Stuck At Hirings and Scalability, Any Tips?</span></div>
<div class="t" style="left:552px;top:428.7px;width:644px"><span class="lk" data-r="13" style="letter-spacing:-0.005px">https://www.reddit.com/r/agency/comments/1ks9qei/stuck_at_hirings_and_scalability_any_tips/</span></div>
<div class="t" style="left:1200px;top:428.7px;width:95px">3mo ago</div>
<div class="t" style="left:1298px;top:428.7px;width:97px;text-align:right">44</div>
<div class="t" style="left:1399px;top:428.7px;width:97px;text-align:right">40</div>
<div class="t " style="left:42px;top:449.7px;width:505px;text-align:left;"><span class="ln" data-r="14" data-l="0" style="letter-spacing:-0.002px">Fired a client for the first time</span></div>
<div class="t" style="left:552px;top:449.7px;width:644px"><span class="lk" data-r="14" style="letter-spacing:-0.003px">https://www.reddit.com/r/agency/comments/1g0iv2c/fired_a_client_for_the_first_time/</span></div>
<div class="t" style="left:1200px;top:449.7px;width:95px">1y ago</div>
<div class="t" style="left:1298px;top:449.7px;width:97px;text-align:right">43</div>
<div class="t" style="left:1399px;top:449.7px;width:97px;text-align:right">40</div>
<div class="t " style="left:42px;top:470.7px;width:505px;text-align:left;"><span class="ln" data-r="15" data-l="0" style="letter-spacing:-0.024px">Raising prices on clients</span></div>
<div class="t" style="left:552px;top:470.7px;width:644px"><span class="lk" data-r="15" style="letter-spacing:0.025px">https://www.reddit.com/r/agency/comments/1m34rcu/raising_prices_on_clients/</span></div>
<div class="t" style="left:1200px;top:470.7px;width:95px">1mo ago</div>
<div class="t" style="left:1298px;top:470.7px;width:97px;text-align:right">41</div>
<div class="t" style="left:1399px;top:470.7px;width:97px;text-align:right">45</div>
<div class="t " style="left:42px;top:491.7px;width:505px;text-align:left;"><span class="ln" data-r="16" data-l="0" style="letter-spacing:0.059px">Lower ticket offers $500/m are worth it too!</span></div>
<div class="t" style="left:552px;top:491.7px;width:644px"><span class="lk" data-r="16" style="letter-spacing:0.002px">https://www.reddit.com/r/agency/comments/1iztdol/lower_ticket_offers_500m_are_worth_it_too/</span></div>
<div class="t" style="left:1200px;top:491.7px;width:95px">6mo ago</div>
<div class="t" style="left:1298px;top:491.7px;width:97px;text-align:right">41</div>
<div class="t" style="left:1399px;top:491.7px;width:97px;text-align:right">92</div>
<div class="t " style="left:42px;top:512.7px;width:505px;text-align:left;"><span class="ln" data-r="17" data-l="0" style="letter-spacing:-0.037px">Agencies are sustainable but not scalable</span></div>
<div class="t" style="left:552px;top:512.7px;width:644px"><span class="lk" data-r="17" style="letter-spacing:-0.022px">https://www.reddit.com/r/agency/comments/1hpmg9v/agencies_are_sustainable_but_not_scalable/</span></div>
<div class="t" style="left:1200px;top:512.7px;width:95px">8mo ago</div>
<div class="t" style="left:1298px;top:512.7px;width:97px;text-align:right">40</div>
<div class="t" style="left:1399px;top:512.7px;width:97px;text-align:right">65</div>
<div class="t " style="left:42px;top:533.7px;width:505px;text-align:left;"><span class="ln" data-r="18" data-l="0" style="letter-spacing:0.030px">4hrs in client onboarding setup - every stupid damn time</span></div>
<div class="t" style="left:552px;top:533.7px;width:644px"><span class="lk" data-r="18" style="letter-spacing:-0.017px">https://www.reddit.com/r/agency/comments/1lo5vtt/4hrs_in_client_onboarding_setup_every_stupid_damn/</span></div>
<div class="t" style="left:1200px;top:533.7px;width:95px">2mo ago</div>
<div class="t" style="left:1298px;top:533.7px;width:97px;text-align:right">37</div>
<div class="t" style="left:1399px;top:533.7px;width:97px;text-align:right">69</div>
<div class="t " style="left:42px;top:554.7px;width:505px;text-align:left;"><span class="ln" data-r="19" data-l="0" style="letter-spacing:-0.046px">My Agency Journey So Far...</span></div>
<div class="t" style="left:552px;top:554.7px;width:644px"><span class="lk" data-r="19" style="letter-spacing:0.007px">https://www.reddit.com/r/agency/comments/1i3s9tv/my_agency_journey_so_far/</span></div>
<div class="t" style="left:1200px;top:554.7px;width:95px">7mo ago</div>
<div class="t" style="left:1298px;top:554.7px;width:97px;text-align:right">37</div>
<div class="t" style="left:1399px;top:554.7px;width:97px;text-align:right">38</div>
<div class="t " style="left:42px;top:575.7px;width:505px;text-align:left;"><span class="ln" data-r="20" data-l="0" style="letter-spacing:-0.016px">My small agency is growing.. need advice</span></div>
<div class="t" style="left:552px;top:575.7px;width:644px"><span class="lk" data-r="20" style="letter-spacing:-0.035px">https://www.reddit.com/r/agency/comments/1giozj0/my_small_agency_is_growing_need_advice/</span></div>
<div class="t" style="left:1200px;top:575.7px;width:95px">10mo ago</div>
<div class="t" style="left:1298px;top:575.7px;width:97px;text-align:right">37</div>
<div class="t" style="left:1399px;top:575.7px;width:97px;text-align:right">38</div>
<div class="t " style="left:42px;top:596.7px;width:505px;text-align:left;"><span class="ln" data-r="21" data-l="0" style="letter-spacing:-0.020px">Scaling agency</span></div>
<div class="t" style="left:552px;top:596.7px;width:644px"><span class="lk" data-r="21" style="letter-spacing:0.059px">https://www.reddit.com/r/agency/comments/1ginbam/scaling_agency/</span></div>
<div class="t" style="left:1200px;top:596.7px;width:95px">10mo ago</div>
<div class="t" style="left:1298px;top:596.7px;width:97px;text-align:right">37</div>
<div class="t" style="left:1399px;top:596.7px;width:97px;text-align:right">37</div>
<div class="t " style="left:42px;top:617.7px;width:505px;text-align:left;"><span class="ln" data-r="22" data-l="0" style="letter-spacing:0.065px">Onboarding but client hasn&#x27;t paid...</span></div>
<div class="t" style="left:552px;top:617.7px;width:644px"><span class="lk" data-r="22" style="letter-spacing:0.027px">https://www.reddit.com/r/agency/comments/1m27qj9/onboarding_but_client_hasnt_paid/</span></div>
<div class="t" style="left:1200px;top:617.7px;width:95px">1mo ago</div>
<div class="t" style="left:1298px;top:617.7px;width:97px;text-align:right">34</div>
<div class="t" style="left:1399px;top:617.7px;width:97px;text-align:right">77</div>
<div class="t " style="left:42px;top:638.7px;width:505px;text-align:left;"><span class="ln" data-r="23" data-l="0" style="letter-spacing:-0.015px">How have you improved your client onboarding experience?</span></div>
<div class="t" style="left:552px;top:638.7px;width:644px"><span class="lk" data-r="23" style="letter-spacing:-0.015px">https://www.reddit.com/r/agency/comments/1hp5vci/how_have_you_improved_your_client_onboarding/</span></div>
<div class="t" style="left:1200px;top:638.7px;width:95px">8mo ago</div>
<div class="t" style="left:1298px;top:638.7px;width:97px;text-align:right">34</div>
<div class="t" style="left:1399px;top:638.7px;width:97px;text-align:right">29</div>
<div class="t " style="left:42px;top:659.7px;width:505px;text-align:left;"><span class="ln" data-r="24" data-l="0" style="letter-spacing:-0.003px">How are you doing your onboarding?</span></div>
<div class="t" style="left:552px;top:659.7px;width:644px"><span class="lk" data-r="24" style="letter-spacing:-0.001px">https://www.reddit.com/r/agency/comments/1lwp4vx/how_are_you_doing_your_onboarding/</span></div>
<div class="t" style="left:1200px;top:659.7px;width:95px">1mo ago</div>
<div class="t" style="left:1298px;top:659.7px;width:97px;text-align:right">33</div>
<div class="t" style="left:1399px;top:659.7px;width:97px;text-align:right">47</div>
<div class="t " style="left:42px;top:680.7px;width:505px;text-align:left;"><span class="ln" data-r="25" data-l="0" style="letter-spacing:-0.053px">(Exited agency managing $500k MRR, multiple M+As, etc.) Launching a newsletter</span><br><span class="ln" data-r="25" data-l="1" style="letter-spacing:0.006px">with my learnings. What do you want from an agency-focused newsletter? Insights,</span><br><span class="ln" data-r="25" data-l="2" style="letter-spacing:-0.043px">stories, or something else?</span></div>
<div class="t" style="left:552px;top:680.7px;width:644px"><span class="lk" data-r="25" style="letter-spacing:-0.032px">https://www.reddit.com/r/agency/comments/1j1yack/exited_agency_managing_500k_mrr_multiple_mas_etc/</span></div>
<div class="t" style="left:1200px;top:680.7px;width:95px">6mo ago</div>
<div class="t" style="left:1298px;top:680.7px;width:97px;text-align:right">31</div>
<div class="t" style="left:1399px;top:680.7px;width:97px;text-align:right">41</div>
<div class="t " style="left:42px;top:733.7px;width:505px;text-align:left;"><span class="ln" data-r="26" data-l="0" style="letter-spacing:-0.059px">Scaling from $15,000 to $50,000 MRR – How Would You Do It?</span></div>
<div class="t" style="left:552px;top:733.7px;width:644px"><span class="lk" data-r="26" style="letter-spacing:-0.027px">https://www.reddit.com/r/agency/comments/1it69pi/scaling_from_15000_to_50000_mrr_how_would_you_do/</span></div>
<div class="t" style="left:1200px;top:733.7px;width:95px">6mo ago</div>
<div class="t" style="left:1298px;top:733.7px;width:97px;text-align:right">31</div>
<div class="t" style="left:1399px;top:733.7px;width:97px;text-align:right">60</div>
<div class="t " style="left:42px;top:754.7px;width:505px;text-align:left;"><span class="ln" data-r="27" data-l="0" style="letter-spacing:0.031px">Scaling a Digital Marketing Agency: It’s Not About More Clients, It’s About Better</span><br><span class="ln" data-r="27" data-l="1" style="letter-spacing:0.039px">Clients</span></div>
<div class="t" style="left:552px;top:754.7px;width:644px"><span class="lk" data-r="27" style="letter-spacing:-0.022px">https://www.reddit.com/r/agency/comments/1iao5da/scaling_a_digital_marketing_agency_its_not_about/</span></div>
<div class="t" style="left:1200px;top:754.7px;width:95px">7mo ago</div>
<div class="t" style="left:1298px;top:754.7px;width:97px;text-align:right">30</div>
<div class="t" style="left:1399px;top:754.7px;width:97px;text-align:right">16</div>
<div class="t " style="left:42px;top:791.7px;width:505px;text-align:left;"><span class="ln" data-r="28" data-l="0" style="letter-spacing:-0.103px">Does anyone have an onboarding manager?</span></div>
<div class="t" style="left:552px;top:791.7px;width:644px"><span class="lk" data-r="28" style="letter-spacing:-0.036px">https://www.reddit.com/r/agency/comments/1m8ztrt/does_anyone_have_an_onboarding_manager/</span></div>
<div class="t" style="left:1200px;top:791.7px;width:95px">28d ago</div>
<div class="t" style="left:1298px;top:791.7px;width:97px;text-align:right">28</div>
<div class="t" style="left:1399px;top:791.7px;width:97px;text-align:right">41</div>
<div class="t " style="left:42px;top:812.7px;width:505px;text-align:left;"><span class="ln" data-r="29" data-l="0" style="letter-spacing:-0.021px">How Do You Handle Clients with Unrealistic Expectations?</span></div>
<div class="t" style="left:552px;top:812.7px;width:644px"><span class="lk" data-r="29" style="letter-spacing:-0.012px">https://www.reddit.com/r/agency/comments/1jc5r7l/how_do_you_handle_clients_with_unrealistic/</span></div>
<div class="t" style="left:1200px;top:812.7px;width:95px">5mo ago</div>
<div class="t" style="left:1298px;top:812.7px;width:97px;text-align:right">28</div>
<div class="t" style="left:1399px;top:812.7px;width:97px;text-align:right">66</div>
<div class="t " style="left:42px;top:833.7px;width:505px;text-align:left;"><span class="ln" data-r="30" data-l="0" style="letter-spacing:-0.041px">Ditch your ICP</span></div>
<div class="t" style="left:552px;top:833.7px;width:644px"><span class="lk" data-r="30" style="letter-spacing:0.076px">https://www.reddit.com/r/agency/comments/1mi147u/ditch_your_icp/</span></div>
<div class="t" style="left:1200px;top:833.7px;width:95px">17d ago</div>
<div class="t" style="left:1298px;top:833.7px;width:97px;text-align:right">28</div>
<div class="t" style="left:1399px;top:833.7px;width:97px;text-align:right">33</div>
<div class="t " style="left:42px;top:854.7px;width:505px;text-align:left;"><span class="ln" data-r="31" data-l="0" style="letter-spacing:-0.021px">how I have been slowly growing my experimentation agency</span></div>
<div class="t" style="left:552px;top:854.7px;width:644px"><span class="lk" data-r="31" style="letter-spacing:-0.043px">https://www.reddit.com/r/agency/comments/1me38p5/how_i_have_been_slowly_growing_my_experimentation/</span></div>
<div class="t" style="left:1200px;top:854.7px;width:95px">22d ago</div>
<div class="t" style="left:1298px;top:854.7px;width:97px;text-align:right">27</div>
<div class="t" style="left:1399px;top:854.7px;width:97px;text-align:right">20</div>
<div class="t " style="left:42px;top:875.7px;width:505px;text-align:left;"><span class="ln" data-r="32" data-l="0" style="letter-spacing:0.011px">How much of your time is just managing clients?</span></div>
<div class="t" style="left:552px;top:875.7px;width:644px"><span class="lk" data-r="32" style="letter-spacing:-0.032px">https://www.reddit.com/r/agency/comments/1l795ov/how_much_of_your_time_is_just_managing_clients/</span></div>
<div class="t" style="left:1200px;top:875.7px;width:95px">2mo ago</div>
<div class="t" style="left:1298px;top:875.7px;width:97px;text-align:right">25</div>
<div class="t" style="left:1399px;top:875.7px;width:97px;text-align:right">47</div>
<div class="t " style="left:42px;top:896.7px;width:505px;text-align:left;"><span class="ln" data-r="33" data-l="0" style="letter-spacing:-0.040px">Has anyone successfully hired commission-only sales reps via Reddit?</span></div>
<div class="t" style="left:552px;top:896.7px;width:644px"><span class="lk" data-r="33" style="letter-spacing:-0.017px">https://www.reddit.com/r/agency/comments/1m67bfe/has_anyone_successfully_hired_commissiononly/</span></div>
<div class="t" style="left:1200px;top:896.7px;width:95px">1mo ago</div>
<div class="t" style="left:1298px;top:896.7px;width:97px;text-align:right">25</div>
<div class="t" style="left:1399px;top:896.7px;width:97px;text-align:right">49</div>
<div class="t " style="left:42px;top:917.7px;width:505px;text-align:left;"><span class="ln" data-r="34" data-l="0" style="letter-spacing:0.049px">What’s up with the “10 clients or you don’t pay” VSL bros? Been getting nonstop</span><br><span class="ln" data-r="34" data-l="1" style="letter-spacing:-0.022px">ads for these agencies for months.</span></div>
<div class="t" style="left:552px;top:917.7px;width:644px"><span class="lk" data-r="34" style="letter-spacing:-0.035px">https://www.reddit.com/r/agency/comments/1lqy6m0/whats_up_with_the_10_clients_or_you_dont_pay_vsl/</span></div>
<div class="t" style="left:1200px;top:917.7px;width:95px">2mo ago</div>
<div class="t" style="left:1298px;top:917.7px;width:97px;text-align:right">22</div>
<div class="t" style="left:1399px;top:917.7px;width:97px;text-align:right">44</div>
</body></html>
